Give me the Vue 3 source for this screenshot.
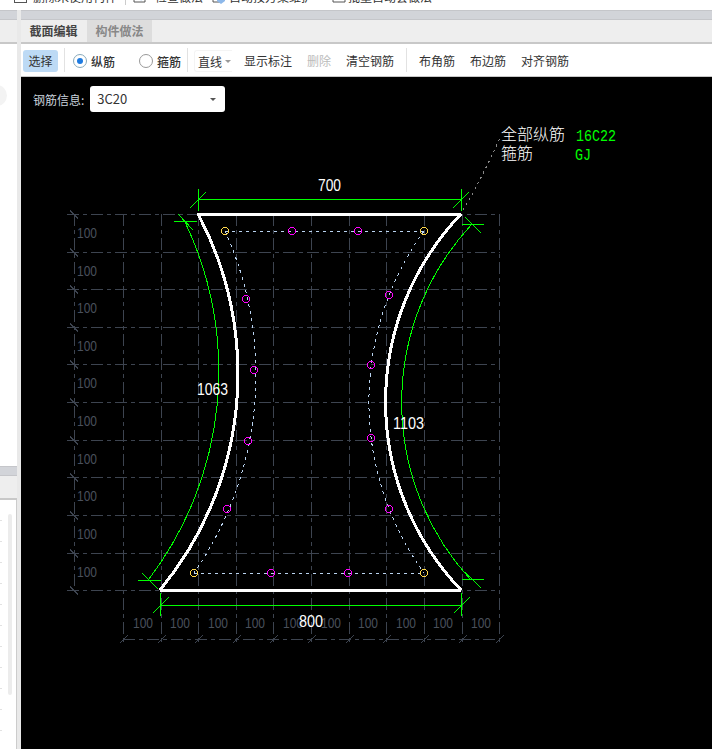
<template>
  <div class="page">
    <div class="topbar">
      <div class="top-item first">
        <span class="box"></span>
        <span>删除未使用构件</span>
      </div>
      <div class="top-sep"></div>
      <div class="top-item check">
        <svg width="16" height="16" viewBox="0 0 16 16" class="top-icon">
          <path d="M2 1h11v13H2z" fill="none" stroke="#555" />
          <path d="M7 9l2 2 4-5" fill="none" stroke="#2f7fd8" stroke-width="2" />
        </svg>
        <span>检查做法</span>
      </div>
      <div class="top-item auto">
        <svg width="16" height="16" viewBox="0 0 16 16" class="top-icon">
          <path d="M2 1h9v13H2z" fill="none" stroke="#555" />
          <path d="M10 7l4 2v4l-4 3-4-3V9z" fill="#8db8ea" />
        </svg>
        <span>自动按方案维护</span>
      </div>
      <div class="top-item batch">
        <svg width="16" height="16" viewBox="0 0 16 16" class="top-icon">
          <path d="M2 1h12v13H2z" fill="none" stroke="#555" />
          <path d="M6 8v3M10 8v3" stroke="#555" />
        </svg>
        <span>批量自动套做法</span>
      </div>
    </div>

    <div class="main">
      <div class="side">
        <div class="side-panel upper">
          <div class="strip"></div>
          <div class="tabs-blank"></div>
          <div class="side-body">
            <span class="blob"></span>
          </div>
        </div>
        <div class="side-panel lower">
          <div class="strip"></div>
          <div class="tabs-blank"></div>
          <div class="side-body table-body">
            <span class="scroll"></span>
          </div>
        </div>
      </div>

      <div class="content">
        <div class="strip"></div>
        <div class="tabs">
          <div class="tab active">截面编辑</div>
          <div class="tab">构件做法</div>
        </div>
        <div class="toolbar">
          <button class="tool selected">选择</button>
          <span class="divider"></span>
          <label class="radio first-radio"><span class="dot on"></span><b>纵筋</b></label>
          <label class="radio"><span class="dot"></span><b>箍筋</b></label>
          <span class="divider"></span>
          <div class="line-select">直线<i class="caret small"></i></div>
          <button class="tool">显示标注</button>
          <button class="tool off">删除</button>
          <button class="tool">清空钢筋</button>
          <span class="divider wide"></span>
          <button class="tool">布角筋</button>
          <button class="tool">布边筋</button>
          <button class="tool">对齐钢筋</button>
        </div>
        <div class="canvas">
          <div class="rebar-info">
            <span class="rebar-label">钢筋信息:</span>
            <div class="rebar-select">3C20<i class="caret"></i></div>
          </div>
          <svg class="drawing" width="691" height="672" viewBox="21 77 691 672">
            <g class="grid">
              <line v-for="y in gridY" :key="'h' + y" x1="67" x2="500" :y1="y" :y2="y" />
              <line v-for="x in gridX" :key="'v' + x" :x1="x" :x2="x" y1="214" y2="645" />
              <line x1="74.5" x2="74.5" y1="214" y2="592" />
              <line x1="123" x2="500" y1="639.5" y2="639.5" />
            </g>
            <g class="ticks">
              <line v-for="y in gridY" :key="'lt' + y" x1="70" x2="78" :y1="y - 4" :y2="y + 4" />
              <line v-for="x in gridX" :key="'bt' + x" :x1="x - 4" :x2="x + 4" y1="643.5" y2="635.5" />
            </g>
            <g class="dim-text">
              <text v-for="y in rowY" :key="'r' + y" x="77" :y="y" textLength="20" lengthAdjust="spacingAndGlyphs">100</text>
              <text v-for="x in colX" :key="'c' + x" :x="x - 10" y="628" textLength="20" lengthAdjust="spacingAndGlyphs">100</text>
            </g>

            <path class="bar-line" d="M225 231H424M194 573H424" />
            <path class="bar-line" d="M225 231A349 349 0 0 1 194 573" />
            <path class="bar-line" d="M424 231A293 293 0 0 0 424 573" />

            <g class="green">
              <path d="M185 222A345 345 0 0 1 149 579" />
              <path d="M472 224A262 262 0 0 0 470 579" />
              <path d="M198 199.5H461M198.5 189V211M190 208L206 192M461.5 189V211M453 208L469 192" />
              <path d="M160 605.5H461M160.5 593V616M153 613L169 597M461.5 593V616M454 613L470 597" />
              <path d="M174 221.5H197M178 214L193 230M462 224.5H484M465 217L481 233" />
              <path d="M138 580.5H161M142 573L158 589M462 579.5H484M465 572L481 588" />
            </g>

            <path class="outline" d="M198 214H461A272 272 0 0 0 461 590H160A339 339 0 0 0 198 214Z" />
            <path class="leader" d="M463 210Q480 182 500 138" />

            <g class="yellow">
              <circle v-for="p in cornerBars" :key="p.join()" :cx="p[0]" :cy="p[1]" r="3.5" />
            </g>
            <g class="magenta">
              <circle v-for="p in sideBars" :key="p.join()" :cx="p[0]" :cy="p[1]" r="3.5" />
            </g>

            <g class="label">
              <text x="318" y="190.5" textLength="23" lengthAdjust="spacingAndGlyphs">700</text>
              <text x="299" y="626.5" textLength="24" lengthAdjust="spacingAndGlyphs">800</text>
              <text x="197" y="394.5" textLength="31" lengthAdjust="spacingAndGlyphs">1063</text>
              <text x="393" y="429" textLength="31" lengthAdjust="spacingAndGlyphs">1103</text>
            </g>
            <text class="note" x="501" y="140">全部纵筋</text>
            <text class="note" x="501" y="159">箍筋</text>
            <text class="note-value" x="576" y="141" textLength="40" lengthAdjust="spacingAndGlyphs">16C22</text>
            <text class="note-value" x="575" y="160" textLength="16" lengthAdjust="spacingAndGlyphs">GJ</text>
          </svg>
        </div>
      </div>
    </div>
  </div>
</template>

<script setup>
const step = 37.62

const gridX = Array.from({ length: 11 }, (_, i) => Math.round(123 + step * i) + 0.5)
const gridY = Array.from({ length: 11 }, (_, i) => Math.round(214 + step * i) + 0.5)
const rowY = Array.from({ length: 10 }, (_, i) => Math.round(238 + step * i))
const colX = Array.from({ length: 10 }, (_, i) => Math.round(142.5 + step * i))

const cornerBars = [[225, 231], [424, 231], [194, 573], [424, 573]]
const sideBars = [
  [292, 231], [358, 231], [271, 573], [348, 573],
  [246, 299], [254, 370], [248, 441], [227, 509],
  [389, 295], [371, 365], [371, 438], [389, 509]
]
</script>

<style>
html,
body {
  margin: 0;
  background: #fff;
}
</style>

<style scoped>
.page {
  width: 712px;
  height: 749px;
  overflow: hidden;
  background: #fff;
  font-family: "Noto Sans CJK SC", "Liberation Sans", sans-serif;
  font-size: 12px;
  color: #333;
}

.topbar {
  height: 10px;
  display: flex;
  align-items: flex-end;
  overflow: hidden;
}

.top-item {
  display: flex;
  align-items: center;
  height: 20px;
  transform: translateY(-4px);
  white-space: nowrap;
}

.top-item.first {
  gap: 6px;
  margin-left: 14px;
  margin-right: 8px;
}

.top-item.check {
  gap: 7px;
  margin-right: 8px;
}

.top-item.auto {
  gap: 2px;
  margin-right: 18px;
}

.top-item.batch {
  gap: 1px;
}

.box {
  width: 13px;
  height: 13px;
  border: 1px solid #555;
  box-sizing: border-box;
}

.top-sep {
  width: 1px;
  height: 5px;
  align-self: flex-start;
  background: #ccc;
  margin-right: 6px;
}

.top-icon {
  flex: none;
}

.main {
  display: flex;
  height: 739px;
}

.side {
  width: 17px;
  flex: none;
  display: flex;
  flex-direction: column;
  gap: 4px;
  border-right: 4px solid #e9e9e9;
  box-sizing: content-box;
}

.side-panel {
  display: flex;
  flex-direction: column;
}

.upper {
  height: 452px;
}

.lower {
  flex: 1;
}

.strip {
  height: 10px;
  flex: none;
  background: #d2d4d9;
  border-top: 1px solid #c5c6ca;
  border-bottom: 1px solid #c5c6ca;
  box-sizing: border-box;
}

.tabs-blank {
  height: 22px;
  flex: none;
  background: #eee;
  border-bottom: 2px solid #c8c8c8;
}

.side-body {
  flex: 1;
  position: relative;
  overflow: hidden;
}

.blob {
  position: absolute;
  left: -14px;
  top: 41px;
  width: 21px;
  height: 21px;
  border-radius: 50%;
  background: #f3f3f3;
}

.table-body {
  border-right: 1px solid #ccc;
  background: repeating-linear-gradient(to bottom, #fff 0 20px, #e2e2e2 20px 21px) 0 0 / 2px 100% no-repeat, #fff;
}

.scroll {
  position: absolute;
  left: 8px;
  top: 14px;
  width: 4px;
  height: 181px;
  border-radius: 2px;
  background: #ececec;
}

.content {
  flex: 1;
  min-width: 0;
  display: flex;
  flex-direction: column;
}

.tabs {
  height: 22px;
  flex: none;
  display: flex;
  gap: 1px;
  background: #eee;
}

.tab {
  width: 65px;
  line-height: 22px;
  text-align: center;
  font-weight: 700;
  color: #888;
  background: #ddd;
}

.tab.active {
  color: #444;
  background: #eee;
}

.toolbar {
  height: 30px;
  flex: none;
  display: flex;
  align-items: center;
  background: #fff;
  border-top: 2px solid #c8c8c8;
  border-bottom: 1px solid #c8c8c8;
  padding: 2px 0 0 2px;
}

.tool {
  border: none;
  background: none;
  padding: 0;
  margin: 0 7.5px;
  font: inherit;
  color: #333;
  line-height: 22px;
}

.tool.selected {
  width: 35px;
  margin: 0;
  background: #bddaf5;
  border-radius: 3px;
}

.tool.off {
  color: #bbb;
}

.divider {
  width: 1px;
  height: 24px;
  background: #e2e2e2;
  margin: -2px 6px 0;
}

.divider.wide {
  margin: -2px 5px 0 4px;
}

.radio {
  display: flex;
  align-items: center;
  gap: 4px;
  margin-right: 24px;
}

.radio b {
  font-weight: 500;
}

.first-radio {
  margin-left: 2px;
}

.radio:nth-of-type(2) {
  margin-right: 0;
}

.dot {
  width: 14px;
  height: 14px;
  box-sizing: border-box;
  border: 1px solid #999;
  border-radius: 50%;
  background: #fff;
  display: block;
  position: relative;
}

.dot.on {
  border-color: #8ab;
}

.dot.on::after {
  content: "";
  position: absolute;
  left: 3px;
  top: 3px;
  width: 6px;
  height: 6px;
  border-radius: 50%;
  background: #1f7be0;
}

.line-select {
  width: 38px;
  height: 22px;
  line-height: 22px;
  box-sizing: border-box;
  padding-left: 3px;
  position: relative;
  margin-right: 4.5px;
  font-size: 12px;
  border: 1px solid #f4f4f4;
  border-right: none;
  border-radius: 3px 0 0 3px;
}

.caret {
  position: absolute;
  right: 9px;
  top: 12px;
  width: 0;
  height: 0;
  border-left: 3px solid transparent;
  border-right: 3px solid transparent;
  border-top: 3px solid #555;
}

.caret.small {
  right: 1px;
  top: 9px;
  border-top-color: #999;
}

.canvas {
  flex: 1;
  position: relative;
  background: #000;
  overflow: hidden;
}

.drawing {
  display: block;
}

.rebar-info {
  position: absolute;
  left: 12px;
  top: 9px;
  display: flex;
  align-items: center;
  gap: 6px;
}

.rebar-label {
  color: #c9d2dc;
}

.rebar-select {
  position: relative;
  width: 135px;
  height: 26px;
  line-height: 26px;
  box-sizing: border-box;
  padding-left: 7px;
  background: #fff;
  border-radius: 3px;
  font-size: 13px;
  color: #333;
}

.grid line {
  stroke: #3d4450;
  stroke-width: 1;
  stroke-dasharray: 12 4 4 4;
  shape-rendering: crispEdges;
}

.ticks line {
  stroke: #3d4450;
  stroke-width: 1;
  shape-rendering: crispEdges;
}

.dim-text text {
  fill: #4a505c;
  font-family: "Liberation Sans", sans-serif;
  font-size: 14px;
}

.bar-line {
  fill: none;
  stroke: #b9d3f0;
  stroke-width: 1;
  stroke-dasharray: 3 4;
  shape-rendering: crispEdges;
}

.green path {
  fill: none;
  stroke: #0f0;
  stroke-width: 1;
  shape-rendering: crispEdges;
}

.outline {
  fill: none;
  stroke: #fff;
  stroke-width: 3;
  stroke-linejoin: bevel;
  shape-rendering: crispEdges;
}

.leader {
  fill: none;
  stroke: #888;
  stroke-width: 1;
  stroke-dasharray: 2 4;
  shape-rendering: crispEdges;
}

.yellow circle {
  fill: none;
  stroke: #ffd84a;
  stroke-width: 1;
  shape-rendering: crispEdges;
}

.magenta circle {
  fill: none;
  stroke: #f0f;
  stroke-width: 1;
  shape-rendering: crispEdges;
}

.label text {
  fill: #fff;
  font-family: "Liberation Sans", sans-serif;
  font-size: 16px;
}

.note {
  fill: #fff;
  font-size: 16px;
  font-family: "Noto Sans CJK SC", sans-serif;
  font-weight: 300;
}

.note-value {
  fill: #0f0;
  font-family: "Liberation Mono", monospace;
  font-size: 16px;
}
</style>
